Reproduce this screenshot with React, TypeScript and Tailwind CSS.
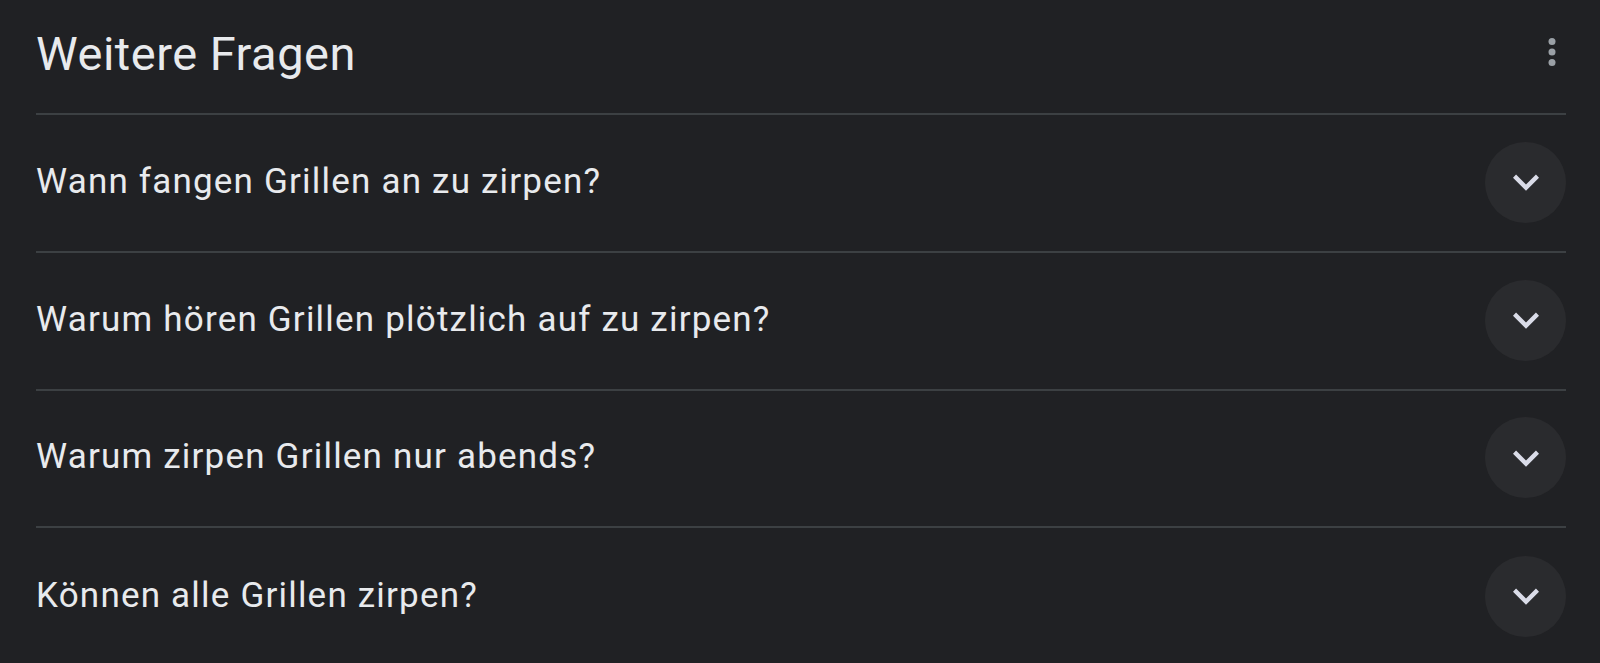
import React from 'react';

const questions = [
    'Wann fangen Grillen an zu zirpen?',
    'Warum hören Grillen plötzlich auf zu zirpen?',
    'Warum zirpen Grillen nur abends?',
    'Können alle Grillen zirpen?',
];

function MoreIcon() {
    return (
        <svg viewBox="0 0 24 24" className="w-[42px] h-[42px]" fill="#9aa0a6">
            <circle cx="12" cy="6" r="2" />
            <circle cx="12" cy="12" r="2" />
            <circle cx="12" cy="18" r="2" />
        </svg>
    );
}

function ChevronDown() {
    return (
        <svg viewBox="0 0 24 24" className="w-[52px] h-[52px]" fill="#dadce8">
            <path d="M16.59 8.59L12 13.17 7.41 8.59 6 10l6 6 6-6z" />
        </svg>
    );
}

export default function App() {
    return (
        <div className="min-h-screen bg-[#202124] pl-9 pr-[34px] font-['Roboto',sans-serif] text-[#e8eaed] overflow-hidden">
            {/* Kopfzeile */}
            <div className="flex items-center justify-between h-[115px] border-b-2 border-[#3c4043]">
                <h2 className="text-[47px] leading-none font-normal tracking-[0.5px] pb-[6px]">Weitere Fragen</h2>
                <div className="-mr-[7px] -mt-[9px]">
                    <MoreIcon />
                </div>
            </div>

            {/* Fragen */}
            {questions.map((q, i) => (
                <div
                    key={q}
                    className={`flex items-center justify-between border-b-2 border-[#3c4043] last:border-b-0 cursor-pointer ${i === 2 ? 'h-[137px]' : 'h-[138px]'}`}
                >
                    <span className="text-[35px] leading-none tracking-[1.2px] pb-[4px]">{q}</span>
                    <div className="w-[81px] h-[81px] rounded-full bg-[#2a2b2e] flex items-center justify-center -mt-[2px]">
                        <ChevronDown />
                    </div>
                </div>
            ))}
        </div>
    );
}
